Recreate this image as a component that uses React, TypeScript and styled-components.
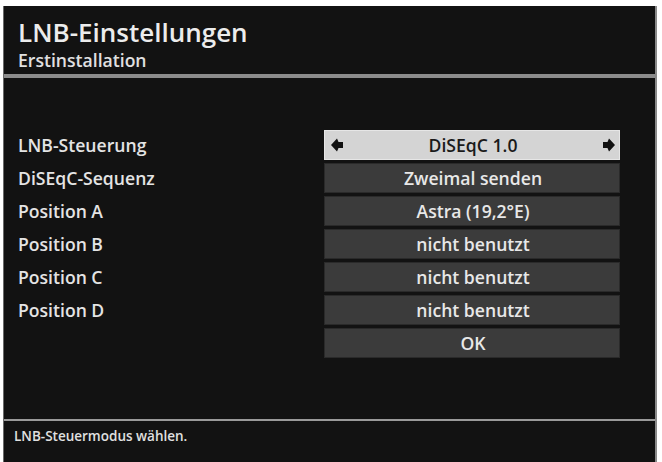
import styled, { createGlobalStyle } from "styled-components";

const GlobalStyle = createGlobalStyle`
  html, body {
    margin: 0;
    padding: 0;
    background: #ffffff;
  }
  body {
    font-family: "Open Sans", "DejaVu Sans", sans-serif;
  }
`;

const Page = styled.div`
  width: 662px;
  height: 462px;
  padding: 6px 4px 0 3px;
  box-sizing: border-box;
  overflow: hidden;
`;

const Screen = styled.div`
  height: 456px;
  width: 654px;
  background: #121212;
  border-left: 1px solid #6a6a6a;
  border-right: 2px solid #8a8a8a;
  box-sizing: border-box;
  display: flex;
  flex-direction: column;
  color: #e6e6e6;
`;

const Header = styled.div`
  height: 72px;
  padding: 10px 0 0 14px;
  box-sizing: border-box;
  border-bottom: 4px solid #8c8c8c;
`;

const Title = styled.div`
  font-size: 26px;
  font-weight: 600;
  line-height: 32px;
  color: #ececec;
`;

const Subtitle = styled.div`
  margin-top: 1px;
  font-size: 17.6px;
  font-weight: 600;
  line-height: 22px;
  color: #e0e0e0;
`;

const Body = styled.div`
  flex: 1;
  padding: 52px 0 0 14px;
  display: flex;
  flex-direction: column;
  gap: 3px;
`;

const Row = styled.div`
  display: grid;
  grid-template-columns: 306px 296px;
  align-items: center;
  height: 30px;
`;

const Label = styled.div`
  font-size: 17.6px;
  font-weight: 600;
  color: #e4e4e4;
`;

const Value = styled.div<{ $active?: boolean }>`
  grid-column: 2;
  height: 30px;
  box-sizing: border-box;
  display: flex;
  align-items: center;
  justify-content: space-between;
  padding: 0 3px 0 5px;
  background: ${(p) => (p.$active ? "#d4d4d4" : "#3b3b3b")};
  border: 1px solid ${(p) => (p.$active ? "#e6e6e6" : "#2a2a2a")};
  color: ${(p) => (p.$active ? "#1a1a1a" : "#e8e8e8")};
  font-size: 17.6px;
  font-weight: 600;
`;

const ValueText = styled.span`
  flex: 1;
  text-align: center;
`;

const Footer = styled.div`
  height: 43px;
  border-top: 2px solid #9a9a9a;
  padding: 6px 0 0 10px;
  box-sizing: border-box;
  font-size: 13.5px;
  font-weight: 600;
  line-height: 19px;
  color: #e0e0e0;
`;

const Arrow: React.FC<{ dir: "left" | "right" }> = ({ dir }) => (
  <svg width="14" height="16" viewBox="0 0 14 16"
    style={{ transform: dir === "right" ? "scaleX(-1)" : undefined }}>
    <polygon points="1,8 7,1.5 8.5,5 13,5 13,11 8.5,11 7,14.5" fill="#111" />
  </svg>
);

const rows = [
  { label: "LNB-Steuerung", value: "DiSEqC 1.0", active: true },
  { label: "DiSEqC-Sequenz", value: "Zweimal senden" },
  { label: "Position A", value: "Astra (19,2°E)" },
  { label: "Position B", value: "nicht benutzt" },
  { label: "Position C", value: "nicht benutzt" },
  { label: "Position D", value: "nicht benutzt" },
];

export default function App() {
  return (
    <Page>
      <GlobalStyle />
      <Screen>
        <Header>
          <Title>LNB-Einstellungen</Title>
          <Subtitle>Erstinstallation</Subtitle>
        </Header>
        <Body>
          {rows.map((r) => (
            <Row key={r.label}>
              <Label>{r.label}</Label>
              <Value $active={r.active}>
                {r.active && <Arrow dir="left" />}
                <ValueText>{r.value}</ValueText>
                {r.active && <Arrow dir="right" />}
              </Value>
            </Row>
          ))}
          <Row>
            <Value>
              <ValueText>OK</ValueText>
            </Value>
          </Row>
        </Body>
        <Footer>LNB-Steuermodus wählen.</Footer>
      </Screen>
    </Page>
  );
}
